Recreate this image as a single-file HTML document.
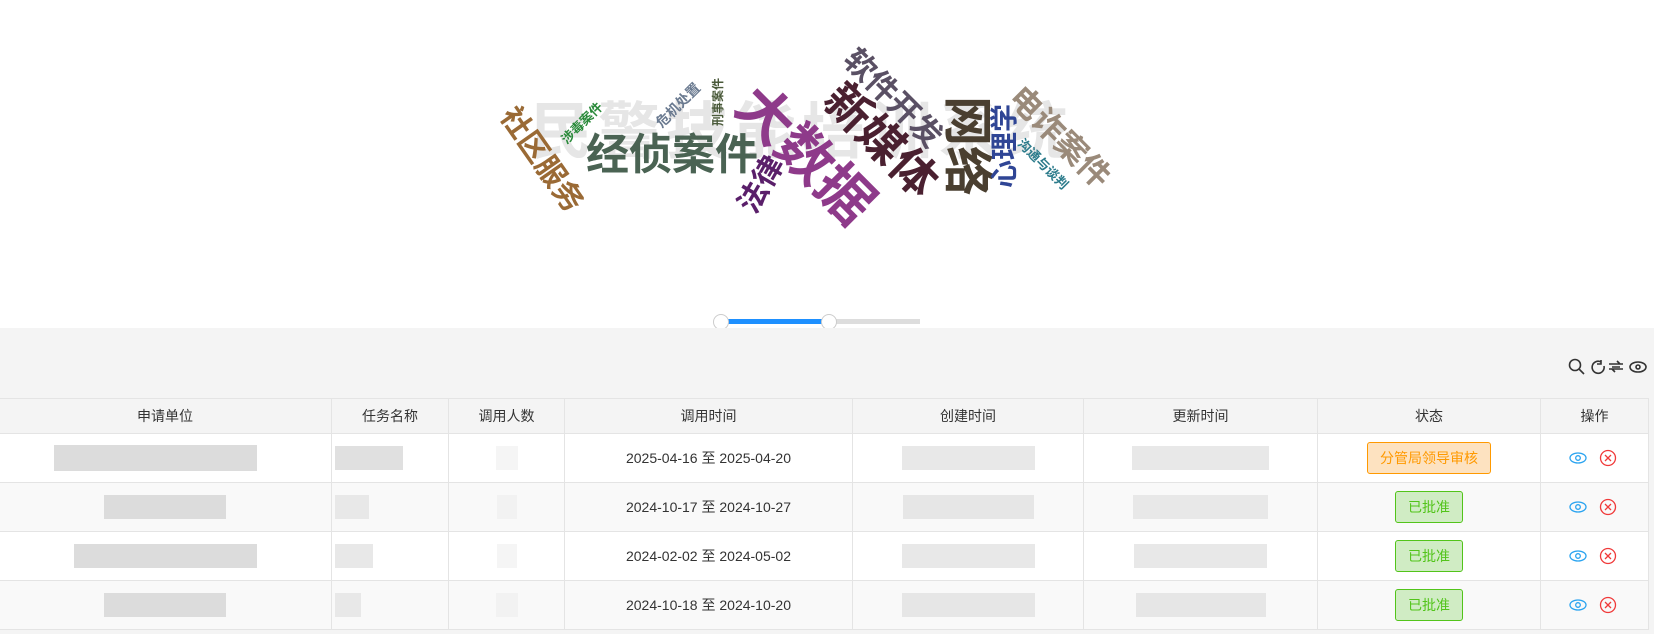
<!DOCTYPE html>
<html><head><meta charset="utf-8"><style>
*{margin:0;padding:0;box-sizing:border-box}
body{width:1654px;height:634px;overflow:hidden;background:#fff;font-family:"Liberation Sans","Noto Sans CJK SC",sans-serif;position:relative}
.w{position:absolute;font-weight:bold;white-space:nowrap;transform-origin:center;line-height:1}
.wm{position:absolute;color:#e6e6e6;font-weight:bold;font-size:62px;line-height:1;white-space:nowrap}
.gray{position:absolute;left:0;top:328px;width:1654px;height:306px;background:#f4f4f4}
table{position:absolute;left:-2px;top:398px;border-collapse:collapse;font-size:14px;color:#333}
td,th{border:1px solid #e4e4e4;text-align:center;font-weight:normal;position:relative}
th{height:35px;background:#f4f4f4}
td{height:49px}
tr.o td{background:#fff} tr.e td{background:#f9f9f9}
.b{display:inline-block;background:#e2e2e2;height:24px;vertical-align:middle}
.tag{display:inline-block;border:1px solid;border-radius:3px;height:32px;line-height:30px;padding:0 12px;font-size:14px}
.or{background:#fde2c0;border-color:#f90;color:#f90}
.gr{background:#d0ecc4;border-color:#52c41a;color:#52c41a}
</style></head><body>
<div class="wm" style="left:530px;top:102px;letter-spacing:6px">民警技能培训系统</div>
<div class="w" style="left:541px;top:160px;font-size:30px;color:#9a6a35;transform:translate(-50%,-50%) rotate(55deg)">社区服务</div>
<div class="w" style="left:582px;top:123px;font-size:13px;color:#2a8a3a;transform:translate(-50%,-50%) rotate(-45deg)">涉毒案件</div>
<div class="w" style="left:672px;top:156px;font-size:43px;color:#4a6353;transform:translate(-50%,-50%)">经侦案件</div>
<div class="w" style="left:678px;top:105px;font-size:14px;color:#6a7a90;transform:translate(-50%,-50%) rotate(-45deg)">危机处置</div>
<div class="w" style="left:718px;top:102px;font-size:12px;color:#4a5a3a;transform:translate(-50%,-50%) rotate(-90deg)">刑事案件</div>
<div class="w" style="left:805px;top:155px;font-size:56px;color:#8e3a8a;transform:translate(-50%,-50%) rotate(45deg)">大数据</div>
<div class="w" style="left:762px;top:185px;font-size:30px;color:#5a1f6a;transform:translate(-50%,-50%) rotate(-60deg)">法律</div>
<div class="w" style="left:881px;top:140px;font-size:46px;color:#4a2030;transform:translate(-50%,-50%) rotate(45deg)">新媒体</div>
<div class="w" style="left:893px;top:98px;font-size:31px;color:#5a5064;transform:translate(-50%,-50%) rotate(45deg)">软件开发</div>
<div class="w" style="left:967px;top:146px;font-size:50px;color:#4a3f30;transform:translate(-50%,-50%) rotate(90deg)">网络</div>
<div class="w" style="left:1005px;top:146px;font-size:28px;color:#2f4595;transform:translate(-50%,-50%) rotate(-90deg)">心理学</div>
<div class="w" style="left:1060px;top:137px;font-size:32px;color:#9a8a7a;transform:translate(-50%,-50%) rotate(45deg)">电诈案件</div>
<div class="w" style="left:1043px;top:164px;font-size:13px;color:#2a7a8a;transform:translate(-50%,-50%) rotate(45deg)">沟通与谈判</div>

<div style="position:absolute;left:721px;top:319px;width:199px;height:5px;background:#ddd"></div>
<div style="position:absolute;left:721px;top:319px;width:108px;height:5px;background:#1e90ff"></div>
<div style="position:absolute;left:713px;top:314px;width:16px;height:16px;border-radius:50%;background:#fff;border:1px solid #ccc"></div>
<div style="position:absolute;left:821px;top:314px;width:16px;height:16px;border-radius:50%;background:#fff;border:1px solid #ccc"></div>

<div class="gray"></div>
<svg style="position:absolute;left:1568px;top:358px" width="82" height="18" viewBox="0 0 82 18" fill="none" stroke="#333" stroke-width="1.6">
<circle cx="7" cy="7" r="5.5"/><path d="M11 11l5 5"/>
<path d="M33 4a6 6 0 1 0 3 4M33 2v4h-4"/>
<path d="M41 6h14M49 3l3 3M41 11h14M47 14l-3-3M44 9l8 0"/>
<ellipse cx="70" cy="9" rx="8" ry="5"/><circle cx="70" cy="9" r="2"/>
</svg>

<table>
<tr><th style="width:333px">申请单位</th><th style="width:117px">任务名称</th><th style="width:116px">调用人数</th><th style="width:288px">调用时间</th><th style="width:231px">创建时间</th><th style="width:234px">更新时间</th><th style="width:223px">状态</th><th style="width:108px">操作</th></tr>
<tr class="o"><td><span class="b" style="width:203px;height:26px;background:#dcdcdc;margin-left:-20px"></span></td><td style="text-align:left;padding-left:3px"><span class="b" style="width:68px;background:#e0e0e0"></span></td><td><span class="b" style="width:22px;background:#f5f5f5"></span></td><td>2025-04-16 至 2025-04-20</td><td><span class="b" style="width:133px;background:#e8e8e8"></span></td><td><span class="b" style="width:137px;background:#e8e8e8"></span></td><td><span class="tag or">分管局领导审核</span></td><td>ICONS</td></tr>
<tr class="e"><td><span class="b" style="width:122px;background:#dcdcdc"></span></td><td style="text-align:left;padding-left:3px"><span class="b" style="width:34px;background:#e8e8e8"></span></td><td><span class="b" style="width:20px;background:#f2f2f2"></span></td><td>2024-10-17 至 2024-10-27</td><td><span class="b" style="width:131px;background:#e6e6e6"></span></td><td><span class="b" style="width:135px;background:#e8e8e8"></span></td><td><span class="tag gr">已批准</span></td><td>ICONS</td></tr>
<tr class="o"><td><span class="b" style="width:183px;background:#dcdcdc"></span></td><td style="text-align:left;padding-left:3px"><span class="b" style="width:38px;background:#e8e8e8"></span></td><td><span class="b" style="width:20px;background:#f5f5f5"></span></td><td>2024-02-02 至 2024-05-02</td><td><span class="b" style="width:133px;background:#e8e8e8"></span></td><td><span class="b" style="width:133px;background:#e8e8e8"></span></td><td><span class="tag gr">已批准</span></td><td>ICONS</td></tr>
<tr class="e"><td><span class="b" style="width:122px;background:#dcdcdc"></span></td><td style="text-align:left;padding-left:3px"><span class="b" style="width:26px;background:#e8e8e8"></span></td><td><span class="b" style="width:22px;background:#f2f2f2"></span></td><td>2024-10-18 至 2024-10-20</td><td><span class="b" style="width:133px;background:#e6e6e6"></span></td><td><span class="b" style="width:130px;background:#e6e6e6"></span></td><td><span class="tag gr">已批准</span></td><td>ICONS</td></tr>
</table>
<script>
var ic='<svg width="52" height="18" viewBox="0 0 52 18" fill="none" stroke-width="1.3" style="vertical-align:middle"><ellipse cx="9" cy="9" rx="8" ry="5" stroke="#29a3f0"/><circle cx="9" cy="9" r="2.3" stroke="#29a3f0"/><circle cx="39" cy="9" r="7.5" stroke="#f03a3a"/><path d="M36 6l6 6M42 6l-6 6" stroke="#f03a3a"/></svg>';
document.querySelectorAll('td').forEach(function(t){if(t.textContent=='ICONS')t.innerHTML=ic;});
</script>
</body></html>
